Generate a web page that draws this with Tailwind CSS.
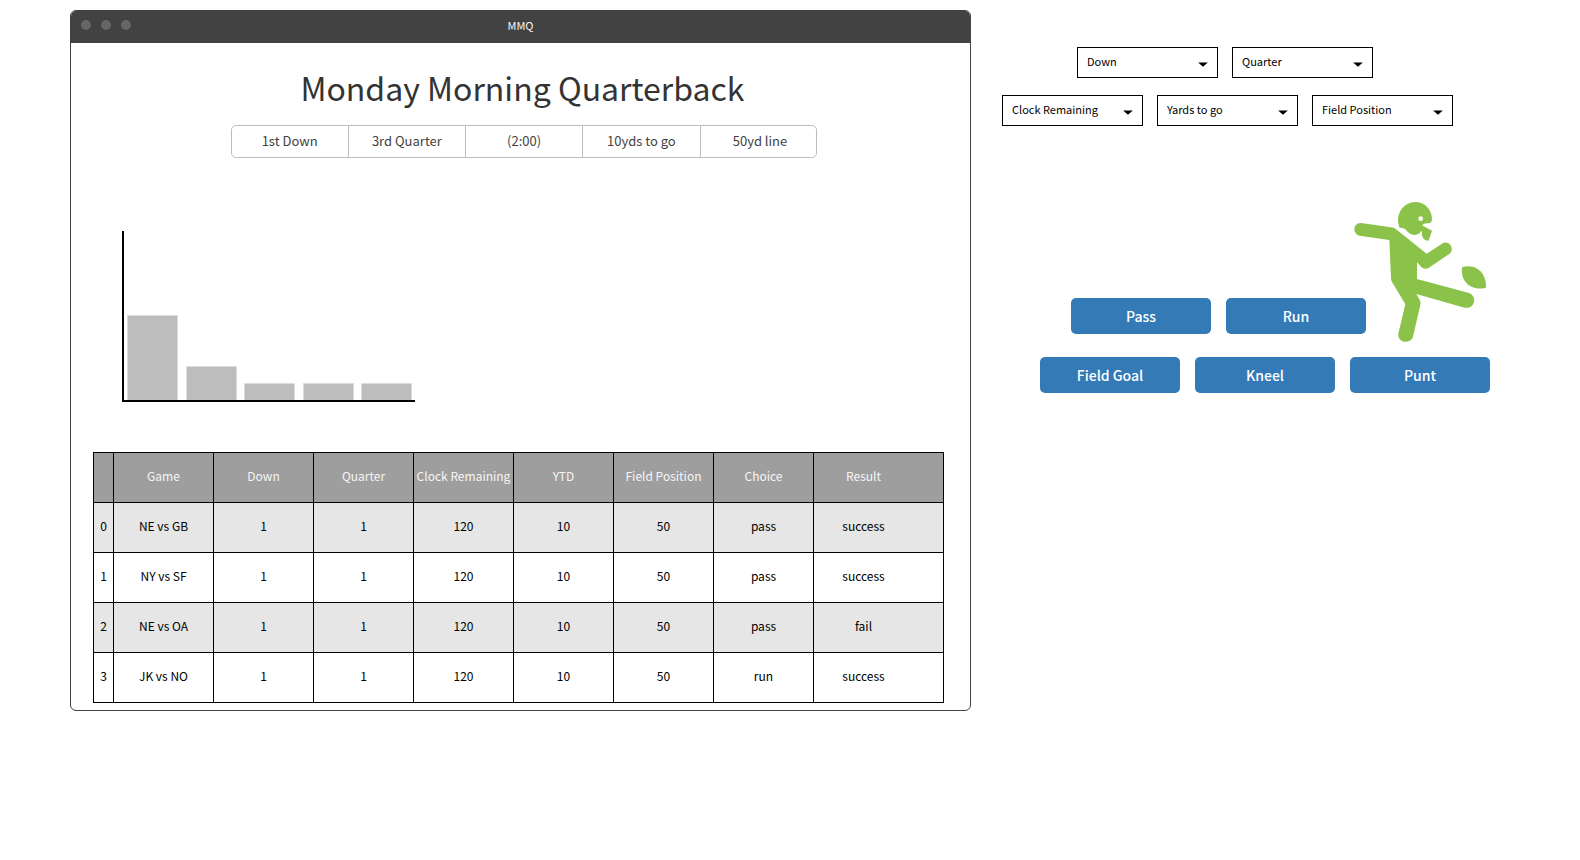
<!DOCTYPE html>
<html lang="en">
<head>
<meta charset="utf-8">
<meta name="viewport" content="width=device-width, initial-scale=1">
<title>MMQ</title>
<script src="https://cdn.jsdelivr.net/npm/@tailwindcss/browser@4"></script>
</head>
<body class="bg-white font-['Noto_Sans_CJK_SC','Noto_Sans',sans-serif] text-black">
<div class="flex items-start gap-[31px] pt-[10px] pr-[90px] pb-10 pl-[70px]">

  <!-- Application window -->
  <main class="min-w-0 flex-1 overflow-hidden rounded-md border border-[#424242] bg-white">
    <header class="grid h-8 grid-cols-[1fr_auto_1fr] items-center bg-[#424242] px-[10px] pb-1">
      <div class="flex gap-[10px]">
        <span class="size-[10px] rounded-full bg-[#666]"></span>
        <span class="size-[10px] rounded-full bg-[#666]"></span>
        <span class="size-[10px] rounded-full bg-[#666]"></span>
      </div>
      <span class="text-[11px] leading-4 text-[#f5f5f5]">MMQ</span>
    </header>

    <h1 class="mt-[23px] pl-1 text-center text-[32px] leading-[42px] text-[#333]">Monday Morning Quarterback</h1>

    <div class="mt-[17px] flex justify-center pl-[6px]">
      <div class="flex h-[33px] w-[586px] divide-x divide-[#bdbdbd] rounded-[5px] border border-[#bdbdbd] text-[13px] leading-5 text-[#424242]" role="group" aria-label="Situation">
        <button type="button" class="flex-1 pb-0.5">1st Down</button>
        <button type="button" class="flex-1 pb-0.5">3rd Quarter</button>
        <button type="button" class="flex-1 pb-0.5">(2:00)</button>
        <button type="button" class="flex-1 pb-0.5">10yds to go</button>
        <button type="button" class="w-[115px] pb-0.5 pl-1">50yd line</button>
      </div>
    </div>

    <!-- Play choice chart -->
    <div class="mt-[73px] ml-[51px] flex h-[171px] w-[293px] items-end justify-between border-b-2 border-l-2 border-black pr-[3px] pl-[3px]" role="img" aria-label="Bar chart of play choices">
      <div class="w-[51px] border border-b-0 border-[#dcdcdc] bg-[#bdbdbd]" style="height:85px"></div>
      <div class="w-[51px] border border-b-0 border-[#dcdcdc] bg-[#bdbdbd]" style="height:34px"></div>
      <div class="w-[51px] border border-b-0 border-[#dcdcdc] bg-[#bdbdbd]" style="height:17px"></div>
      <div class="w-[51px] border border-b-0 border-[#dcdcdc] bg-[#bdbdbd]" style="height:17px"></div>
      <div class="w-[51px] border border-b-0 border-[#dcdcdc] bg-[#bdbdbd]" style="height:17px"></div>
    </div>

    <div class="mt-[50px] mb-[7px] pr-[26px] pl-[22px]">
      <table class="w-full table-fixed border-collapse border border-black text-center text-xs [&_td]:h-[50px] [&_td]:border [&_td]:border-black [&_td]:p-0 [&_td]:pb-[3px] [&_th]:h-[50px] [&_th]:border [&_th]:border-black [&_th]:p-0 [&_th]:pb-[3px] [&_th]:font-normal [&_th]:whitespace-nowrap">
        <colgroup>
          <col class="w-5"><col><col><col><col><col><col><col><col class="w-[130px]">
        </colgroup>
        <thead>
          <tr class="bg-[#9e9e9e] text-[#f5f5f5]">
            <th aria-label="Row"></th><th>Game</th><th>Down</th><th>Quarter</th><th>Clock Remaining</th><th>YTD</th><th>Field Position</th><th>Choice</th><th><span class="pr-[30px]">Result</span></th>
          </tr>
        </thead>
        <tbody>
          <tr class="bg-[#e6e6e6]"><td>0</td><td>NE vs GB</td><td>1</td><td>1</td><td>120</td><td>10</td><td>50</td><td>pass</td><td><span class="pr-[30px]">success</span></td></tr>
          <tr><td>1</td><td>NY vs SF</td><td>1</td><td>1</td><td>120</td><td>10</td><td>50</td><td>pass</td><td><span class="pr-[30px]">success</span></td></tr>
          <tr class="bg-[#e6e6e6]"><td>2</td><td>NE vs OA</td><td>1</td><td>1</td><td>120</td><td>10</td><td>50</td><td>pass</td><td><span class="pr-[30px]">fail</span></td></tr>
          <tr><td>3</td><td>JK vs NO</td><td>1</td><td>1</td><td>120</td><td>10</td><td>50</td><td>run</td><td><span class="pr-[30px]">success</span></td></tr>
        </tbody>
      </table>
    </div>
  </main>

  <!-- Controls -->
  <aside class="w-[488px] shrink-0 pt-[37px]">
    <form class="flex flex-col gap-[17px] text-[11px] leading-4">
      <div class="flex gap-[14px] pl-[75px]">
        <div class="relative">
          <select aria-label="Down" class="h-[31px] w-[141px] appearance-none border border-black bg-white pr-7 pb-[3px] pl-[9px]"><option>Down</option></select>
          <svg class="pointer-events-none absolute top-[15px] right-[10px] h-[5px] w-[10px]" viewBox="0 0 10 5"><path d="M0.2 0.5H9.8L5.6 4.2Q5 4.8 4.4 4.2Z"/></svg>
        </div>
        <div class="relative">
          <select aria-label="Quarter" class="h-[31px] w-[141px] appearance-none border border-black bg-white pr-7 pb-[3px] pl-[9px]"><option>Quarter</option></select>
          <svg class="pointer-events-none absolute top-[15px] right-[10px] h-[5px] w-[10px]" viewBox="0 0 10 5"><path d="M0.2 0.5H9.8L5.6 4.2Q5 4.8 4.4 4.2Z"/></svg>
        </div>
      </div>
      <div class="flex gap-[14px]">
        <div class="relative">
          <select aria-label="Clock Remaining" class="h-[31px] w-[141px] appearance-none border border-black bg-white pr-7 pb-[3px] pl-[9px]"><option>Clock Remaining</option></select>
          <svg class="pointer-events-none absolute top-[15px] right-[10px] h-[5px] w-[10px]" viewBox="0 0 10 5"><path d="M0.2 0.5H9.8L5.6 4.2Q5 4.8 4.4 4.2Z"/></svg>
        </div>
        <div class="relative">
          <select aria-label="Yards to go" class="h-[31px] w-[141px] appearance-none border border-black bg-white pr-7 pb-[3px] pl-[9px]"><option>Yards to go</option></select>
          <svg class="pointer-events-none absolute top-[15px] right-[10px] h-[5px] w-[10px]" viewBox="0 0 10 5"><path d="M0.2 0.5H9.8L5.6 4.2Q5 4.8 4.4 4.2Z"/></svg>
        </div>
        <div class="relative">
          <select aria-label="Field Position" class="h-[31px] w-[141px] appearance-none border border-black bg-white pr-7 pb-[3px] pl-[9px]"><option>Field Position</option></select>
          <svg class="pointer-events-none absolute top-[15px] right-[10px] h-[5px] w-[10px]" viewBox="0 0 10 5"><path d="M0.2 0.5H9.8L5.6 4.2Q5 4.8 4.4 4.2Z"/></svg>
        </div>
      </div>
    </form>

    <div class="mt-[76px] flex flex-col gap-[15px] text-sm leading-5 font-medium text-white">
      <div class="flex items-end justify-end pr-1">
        <div class="mb-2 flex gap-[15px]">
          <button type="button" class="h-9 w-[140px] rounded-[5px] bg-[#337ab7]">Pass</button>
          <button type="button" class="h-9 w-[140px] rounded-[5px] bg-[#337ab7]">Run</button>
        </div>
        <!-- Kicking player -->
        <svg class="-ml-3 h-[140px] w-[132px]" viewBox="42 36 396 420" fill="#8bc34a" role="img" aria-label="Football player kicking">
          <path d="M179 114C172 96 173 82 178 70C186 49 205 36 226 36C254 36 276 58 276 88Q276 99 265 100Q254 98 246 106L276 122L266 152Q254 152 249 143Q243 135 246 124Q238 124 240 129C224 139 210 136 196 118Q187 111 179 114ZM242 79A7 7 0 1 0 242 93A7 7 0 1 0 242 79Z" fill-rule="evenodd"/>
          <path d="M63 99L153 112Q162 112 170 119L260 191L306 161C325 149 346 174 329 191L271 230C261 238 251 238 244 231L231 217V267L387 309C413 318 405 359 374 353L229 312L239 329Q243 336 241 345L219 440C212 464 172 459 175 431L196 343L156 276Q153 272 153 265L148 150L58 137C36 132 39 98 63 99Z"/>
          <path d="M366 232C405 220 440 246 438 293C397 305 360 277 366 232Z"/>
        </svg>
      </div>
      <div class="flex justify-end gap-[15px]">
        <button type="button" class="h-9 w-[140px] rounded-[5px] bg-[#337ab7]">Field Goal</button>
        <button type="button" class="h-9 w-[140px] rounded-[5px] bg-[#337ab7]">Kneel</button>
        <button type="button" class="h-9 w-[140px] rounded-[5px] bg-[#337ab7]">Punt</button>
      </div>
    </div>
  </aside>
</div>
</body>
</html>
